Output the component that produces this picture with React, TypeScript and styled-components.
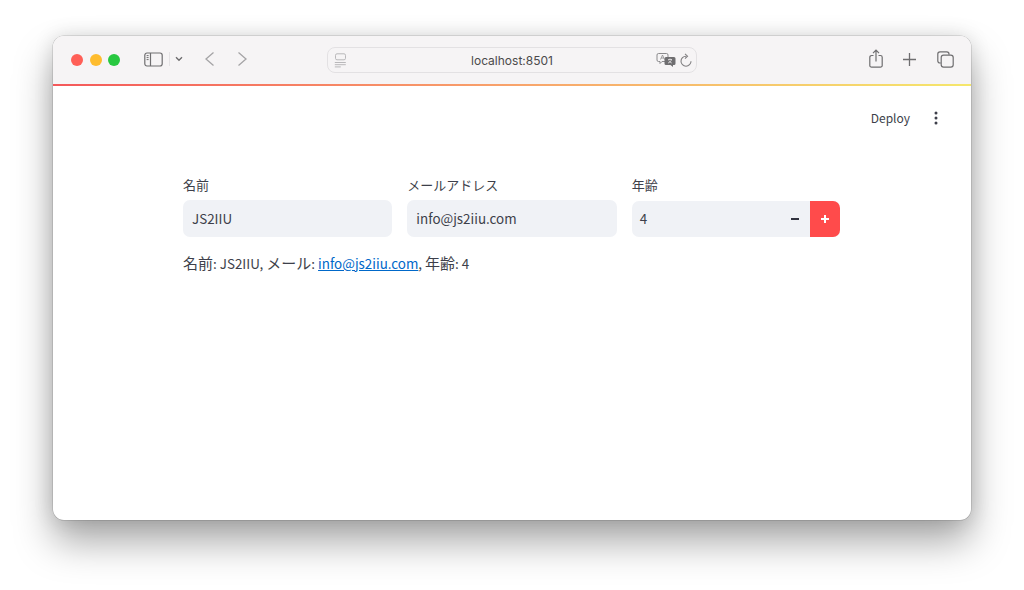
import React from "react";
import styled, { createGlobalStyle } from "styled-components";

const Global = createGlobalStyle`
  html, body { margin: 0; padding: 0; background: #fff; }
  body { width: 1024px; height: 590px; overflow: hidden; font-family: "Noto Sans CJK JP", "Noto Sans", sans-serif; }
  * { box-sizing: border-box; }
`;

const Stage = styled.div`
  width: 1024px;
  height: 590px;
  padding: 36px 53px 70px 53px;
`;
const Win = styled.div`
  width: 918px;
  height: 484px;
  border-radius: 11px;
  background: #fff;
  overflow: hidden;
  display: flex;
  flex-direction: column;
  box-shadow: 0 0 0 0.5px rgba(0,0,0,0.2), 0 22px 38px rgba(0,0,0,0.34), 0 0 20px rgba(0,0,0,0.13);
`;
const TitleBar = styled.div`
  height: 48px;
  flex: none;
  background: #f6f4f5;
  display: flex;
  align-items: center;
  position: relative;
  padding: 0 17px 0 18px;
`;
const Lights = styled.div`
  display: flex;
  gap: 6.5px;
  margin-right: 24px;
`;
const Light = styled.span<{ $c: string }>`
  width: 12px;
  height: 12px;
  border-radius: 50%;
  background: ${p => p.$c};
`;
const ToolIcon = styled.svg<{ $ml?: number; $mb?: number }>`
  display: block;
  flex: none;
  margin-left: ${p => p.$ml ?? 0}px;
  margin-bottom: ${p => p.$mb ?? 2}px;
`;
const AddressBar = styled.div`
  position: absolute;
  left: 274px;
  top: 11px;
  width: 370px;
  height: 26px;
  border: 1px solid #e3e1e3;
  border-radius: 8px;
  display: flex;
  align-items: center;
  justify-content: center;
  font-family: "Inter", "Liberation Sans", sans-serif;
  font-size: 12px;
  color: #4b4a4b;
`;
const SiteIcon = styled.svg`
  position: absolute;
  left: 6px;
  top: 5px;
`;
const Translate = styled.svg`
  position: absolute;
  left: 328px;
  top: 4px;
`;
const Reload = styled.svg`
  position: absolute;
  left: 351px;
  top: 5px;
`;
const Right = styled.div`
  margin-left: auto;
  display: flex;
  align-items: center;
`;
const Rainbow = styled.div`
  height: 2px;
  flex: none;
  background: linear-gradient(90deg, #f4585a 0%, #f8a36b 50%, #f5e76c 100%);
`;
const Page = styled.div`
  flex: 1;
  position: relative;
  color: #3d3f4a;
  padding: 90px 130px 0 130px;
`;
const Header = styled.div`
  position: absolute;
  right: 33px;
  top: 22px;
  display: flex;
  align-items: center;
  gap: 24px;
  font-size: 12px;
  line-height: 20px;
  color: #3d3f4a;
`;
const Kebab = styled.svg`
  display: block;
`;
const Columns = styled.div`
  display: flex;
  gap: 15px;
  width: 658px;
`;
const Field = styled.div`
  flex: 1 1 0;
  min-width: 0;
  display: flex;
  flex-direction: column;
`;
const Label = styled.div`
  font-size: 13px;
  line-height: 18px;
  height: 18px;
  margin-bottom: 6px;
  color: #3d3f4a;
`;
const Input = styled.div`
  height: 37px;
  background: #f0f2f6;
  border-radius: 7px;
  padding: 0 9px 1px;
  display: flex;
  align-items: center;
  font-size: 13.4px;
  color: #3d3f4a;
`;
const NumberBox = styled.div`
  height: 35.5px;
  margin: 1px 1px 0 0;
  background: #f0f2f6;
  border-radius: 7px;
  display: flex;
  align-items: center;
  overflow: hidden;
  font-size: 13.4px;
  color: #3d3f4a;
`;
const NumberValue = styled.div`
  flex: 1;
  padding: 0 0 1px 8px;
`;
const Step = styled.div<{ $active?: boolean }>`
  width: 30px;
  align-self: stretch;
  display: flex;
  align-items: center;
  justify-content: center;
  background: ${p => (p.$active ? "#ff4b4b" : "transparent")};
`;
const Output = styled.p`
  margin: 14px 0 0 0;
  font-size: 13.4px;
  line-height: 24px;
  color: #3d3f4a;
`;
const Cjk = styled.span`
  font-size: 15px;
`;
const MailLink = styled.a`
  color: #0068c9;
  text-decoration: underline;
`;

export default function App() {
  return (
    <Stage>
      <Global />
      <Win>
        <TitleBar>
          <Lights>
            <Light $c="#ff5f57" />
            <Light $c="#febc2e" />
            <Light $c="#28c840" />
          </Lights>
          <ToolIcon width="19" height="15" viewBox="0 0 19 15" fill="none" stroke="#6f6e70" strokeWidth="1.2">
            <rect x="0.8" y="1" width="17.4" height="13" rx="2.2" />
            <path d="M6.5 1v13" />
            <path d="M2.6 3.6h2M2.6 5.6h2M2.6 7.6h2" strokeWidth="1" />
          </ToolIcon>
          <ToolIcon $ml={6} width="1" height="14" viewBox="0 0 1 14">
            <rect width="1" height="14" fill="#e4e2e4" />
          </ToolIcon>
          <ToolIcon $ml={5} width="8" height="6" viewBox="0 0 8 6" fill="none" stroke="#6f6e70" strokeWidth="1.4">
            <path d="M1 1.2l3 3 3-3" />
          </ToolIcon>
          <ToolIcon $ml={21} width="11" height="16" viewBox="0 0 11 16" fill="none" stroke="#a5a4a6" strokeWidth="1.3">
            <path d="M9.5 1.5L2 8l7.5 6.5" />
          </ToolIcon>
          <ToolIcon $ml={22} width="11" height="16" viewBox="0 0 11 16" fill="none" stroke="#a5a4a6" strokeWidth="1.3">
            <path d="M1.5 1.5L9 8l-7.5 6.5" />
          </ToolIcon>
          <AddressBar>
            <SiteIcon width="13" height="15" viewBox="0 0 13 15" fill="none" stroke="#b9b8ba" strokeWidth="1">
              <rect x="1.5" y="0.8" width="10" height="6" rx="1.5" />
              <path d="M0.8 9.5h11M0.8 11.7h11M0.8 13.9h6" />
            </SiteIcon>
            localhost:8501
            <Translate width="20" height="16" viewBox="0 0 20 16" fill="none">
              <path d="M2.5 1.5h8a1.5 1.5 0 0 1 1.5 1.5v5a1.5 1.5 0 0 1-1.5 1.5H6l-2 2v-2H2.5A1.5 1.5 0 0 1 1 8V3a1.5 1.5 0 0 1 1.5-1.5z" stroke="#8b8a8c" strokeWidth="1" />
              <path d="M4.5 7.5L6.5 3l2 4.5M5.2 6h2.6" stroke="#8b8a8c" strokeWidth="0.8" />
              <path d="M10 5h8a1.5 1.5 0 0 1 1.5 1.5v5A1.5 1.5 0 0 1 18 13h-1v2l-2.5-2H10a1.5 1.5 0 0 1-1.5-1.5v-5A1.5 1.5 0 0 1 10 5z" fill="#6f6e70" />
              <path d="M12 7.5h4M14 6.5v1M15.5 7.5c-.4 2-1.8 3-3.5 3.5M12.8 8.5c.5 1 1.5 2 3 2.5" stroke="#f6f4f5" strokeWidth="0.7" />
            </Translate>
            <Reload width="14" height="15" viewBox="0 0 14 15" fill="none" stroke="#807f81" strokeWidth="1.1">
              <path d="M7 3.2A5 5 0 1 0 12 8.2" />
              <path d="M6 0.8L8.5 3.2 6 5.6" />
            </Reload>
          </AddressBar>
          <Right>
            <ToolIcon $mb={3} width="14" height="19" viewBox="0 0 14 19" fill="none" stroke="#6f6e70" strokeWidth="1.2">
              <path d="M4.5 6.5H2.6A1.8 1.8 0 0 0 .8 8.3v8.1a1.8 1.8 0 0 0 1.8 1.8h8.8a1.8 1.8 0 0 0 1.8-1.8V8.3a1.8 1.8 0 0 0-1.8-1.8H9.5" />
              <path d="M7 12.5V1.2M4 4.1L7 1.1l3 3" />
            </ToolIcon>
            <ToolIcon $ml={20} width="13" height="13" viewBox="0 0 13 13" fill="none" stroke="#6f6e70" strokeWidth="1.3">
              <path d="M6.5 0v13M0 6.5h13" />
            </ToolIcon>
            <ToolIcon $ml={21} width="17" height="17" viewBox="0 0 17 17" fill="none" stroke="#6f6e70" strokeWidth="1.2">
              <path d="M3.8 12H3A2.2 2.2 0 0 1 .8 9.8V3A2.2 2.2 0 0 1 3 .8h6.8A2.2 2.2 0 0 1 12 3v.8" />
              <rect x="4.2" y="4.2" width="12" height="12" rx="2.4" />
            </ToolIcon>
          </Right>
        </TitleBar>
        <Rainbow />
        <Page>
          <Header>
            <span>Deploy</span>
            <Kebab width="4" height="14" viewBox="0 0 4 14" fill="#3d3f4a">
              <circle cx="2" cy="2" r="1.5" />
              <circle cx="2" cy="7" r="1.5" />
              <circle cx="2" cy="12" r="1.5" />
            </Kebab>
          </Header>
          <Columns>
            <Field>
              <Label>名前</Label>
              <Input>JS2IIU</Input>
            </Field>
            <Field>
              <Label>メールアドレス</Label>
              <Input>info@js2iiu.com</Input>
            </Field>
            <Field>
              <Label>年齢</Label>
              <NumberBox>
                <NumberValue>4</NumberValue>
                <Step>
                  <svg width="8" height="2" viewBox="0 0 8 2"><rect width="8" height="2" fill="#31333f" /></svg>
                </Step>
                <Step $active>
                  <svg width="8" height="8" viewBox="0 0 8 8"><path d="M3 0h2v3h3v2H5v3H3V5H0V3h3z" fill="#fff" /></svg>
                </Step>
              </NumberBox>
            </Field>
          </Columns>
          <Output>
            <Cjk>名前</Cjk>: JS2IIU, <Cjk>メール</Cjk>: <MailLink href="#">info@js2iiu.com</MailLink>, <Cjk>年齢</Cjk>: 4
          </Output>
        </Page>
      </Win>
    </Stage>
  );
}
